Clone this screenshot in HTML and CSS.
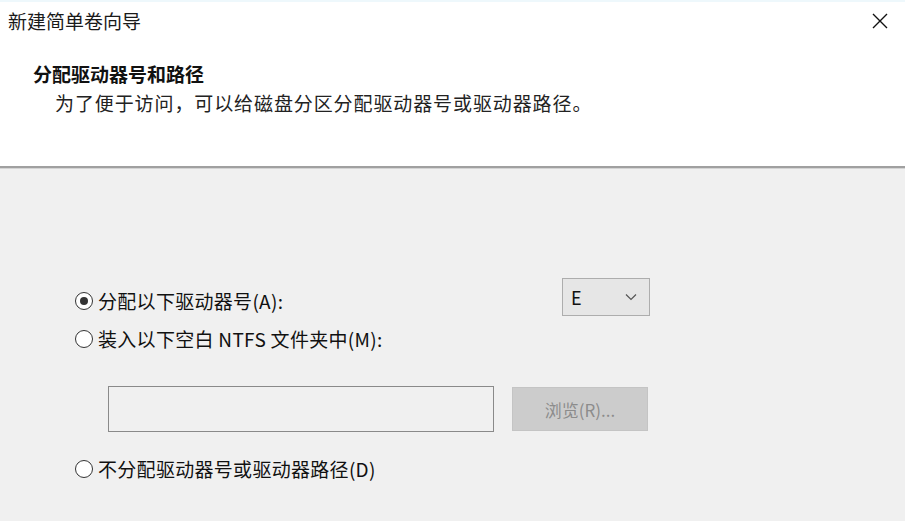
FILE: index.html
```html
<!DOCTYPE html>
<html lang="zh-CN">
  <head>
    <meta charset="UTF-8" />
    <meta name="viewport" content="width=device-width, initial-scale=1.0" />
    <title>新建简单卷向导</title>
    <link rel="stylesheet" href="styles.css">
  </head>
  <body>
    <div class="dialog">
      <!-- title bar -->
      <div class="titlebar">
        <span class="title">新建简单卷向导</span>
        <svg class="close" width="16" height="16" viewBox="0 0 16 16">
          <path d="M1 1 L15 15 M15 1 L1 15" stroke="#111" stroke-width="1.4" fill="none" />
        </svg>
      </div>

      <!-- header -->
      <div class="header">
        <h2>分配驱动器号和路径</h2>
        <p>为了便于访问，可以给磁盘分区分配驱动器号或驱动器路径。</p>
      </div>
      <div class="sep"></div>

      <!-- options -->
      <div class="content">
        <div class="row first">
          <label class="option">
            <span class="radio checked"></span>
            <span>分配以下驱动器号(A):</span>
          </label>
          <div class="select">
            <span>E</span>
            <svg width="12" height="8" viewBox="0 0 12 8">
              <path d="M1 1.5 L6 6.5 L11 1.5" stroke="#555" stroke-width="1.2" fill="none" />
            </svg>
          </div>
        </div>

        <label class="option second">
          <span class="radio"></span>
          <span>装入以下空白 NTFS 文件夹中(M):</span>
        </label>

        <div class="path-row">
          <div class="textbox"></div>
          <div class="button">浏览(R)...</div>
        </div>

        <label class="option third">
          <span class="radio"></span>
          <span>不分配驱动器号或驱动器路径(D)</span>
        </label>
      </div>
    </div>
  </body>
</html>
```

FILE: styles.css
```css
body {
  margin: 0;
  padding: 0;
  font-family: "Noto Sans CJK SC", "Noto Sans", sans-serif;
  color: #111;
}

.dialog {
  width: 905px;
  height: 521px;
  background-color: #f0f0f0;
  overflow: hidden;
}

.titlebar {
  height: 40px;
  background-color: #fff;
  border-top: 2px solid #eef8fc;
  box-sizing: border-box;
  display: flex;
  align-items: center;
  justify-content: space-between;
  padding: 0 17px 0 8px;
}

.title {
  font-size: 19px;
  line-height: 24px;
  color: #1a1a1a;
}

.header {
  height: 126px;
  background-color: #fff;
  box-sizing: border-box;
  padding: 22px 0 0 33px;
}

.header h2 {
  margin: 0;
  font-size: 19px;
  font-weight: bold;
  line-height: 24px;
}

.header p {
  margin: 5px 0 0 22px;
  font-size: 19px;
  letter-spacing: 0.9px;
  line-height: 24px;
  color: #222;
}

.sep {
  height: 2px;
  background-color: #a0a0a0;
  border-bottom: 1px solid #d4d4d4;
}

.content {
  padding: 109px 0 0 75px;
}

.row {
  display: flex;
  align-items: center;
  height: 38px;
}

.option {
  display: flex;
  align-items: center;
  gap: 5px;
  font-size: 19px;
  letter-spacing: 0.3px;
  line-height: 24px;
  color: #111;
}

.row .option {
  width: 487px;
  margin-top: 8px;
}

.second {
  margin-top: 11px;
}

.third {
  margin-top: 25px;
}

.radio {
  width: 18px;
  height: 18px;
  box-sizing: border-box;
  border: 1.5px solid #333;
  border-radius: 50%;
  background-color: #fff;
  flex-shrink: 0;
  position: relative;
}

.radio.checked::after {
  content: "";
  position: absolute;
  left: 3.5px;
  top: 3.5px;
  width: 8px;
  height: 8px;
  border-radius: 50%;
  background-color: #333;
}

.select {
  width: 88px;
  height: 38px;
  box-sizing: border-box;
  border: 1px solid #adadad;
  background-color: #e6e6e6;
  display: flex;
  align-items: center;
  justify-content: space-between;
  padding: 0 12px 0 8px;
  font-size: 18px;
}

.path-row {
  display: flex;
  align-items: center;
  gap: 18px;
  margin: 35px 0 0 33px;
}

.textbox {
  width: 386px;
  height: 46px;
  box-sizing: border-box;
  border: 1.5px solid #8a8a8a;
  background-color: #f0f0f0;
}

.button {
  width: 136px;
  height: 44px;
  box-sizing: border-box;
  border: 1px solid #c4c4c4;
  background-color: #cccccc;
  color: #8c8c8c;
  font-size: 17px;
  display: flex;
  align-items: center;
  justify-content: center;
}
```
